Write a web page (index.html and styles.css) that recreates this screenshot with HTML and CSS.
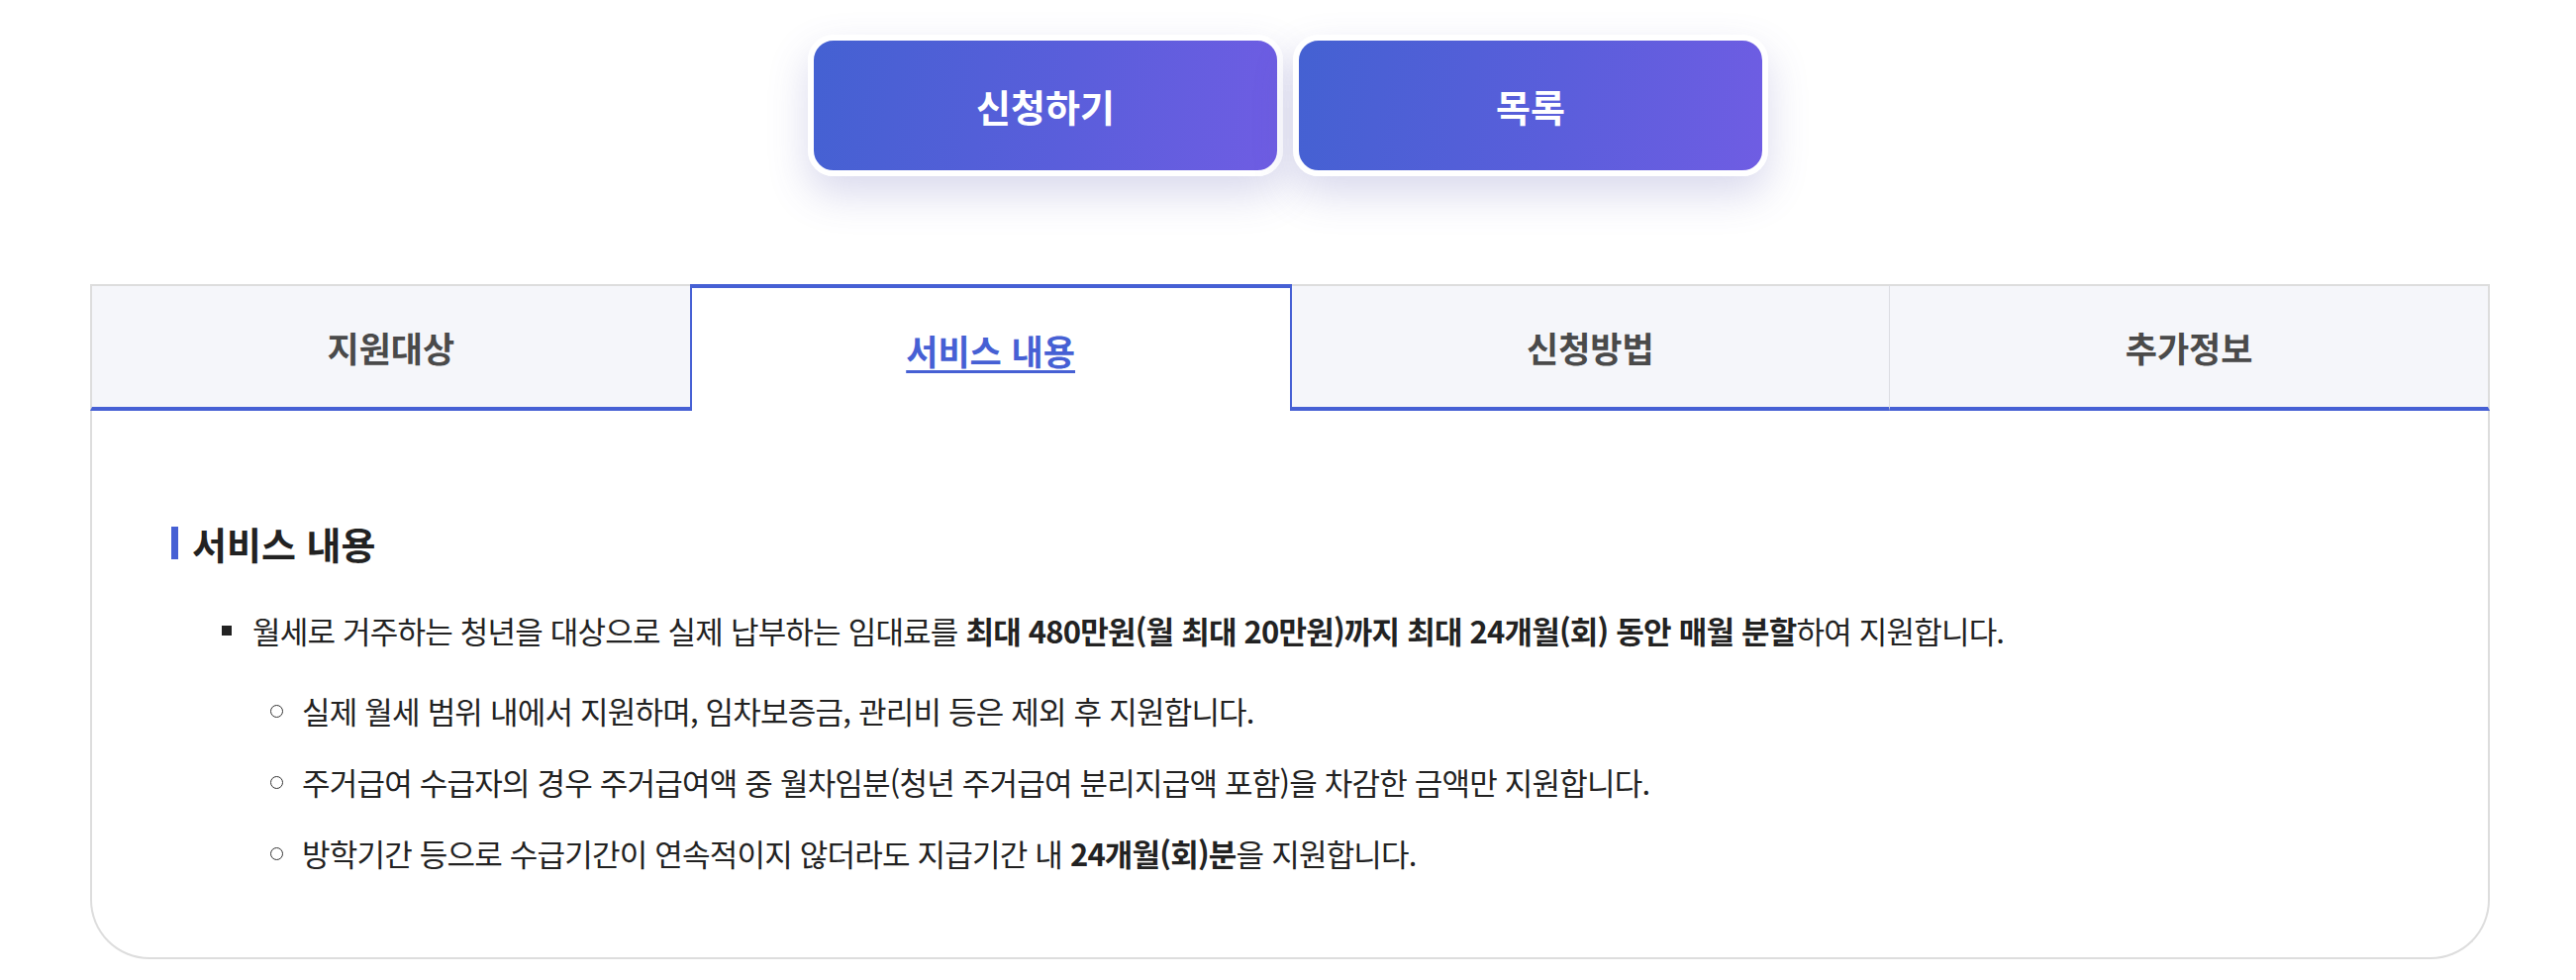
FILE: index.html
```html
<!DOCTYPE html>
<html lang="ko">
<head>
    <meta charset="UTF-8">
    <meta name="viewport" content="width=device-width, initial-scale=1.0">
    <title>청년월세 지원</title>
    <link rel="stylesheet" href="styles.css">
</head>
<body>
    <div class="btn-area">
        <button class="btn-main">신청하기</button>
        <button class="btn-main">목록</button>
    </div>

    <div class="tab-box">
        <ul class="tabs">
            <li class="tab">지원대상</li>
            <li class="tab active"><a href="#">서비스 내용</a></li>
            <li class="tab">신청방법</li>
            <li class="tab">추가정보</li>
        </ul>
        <div class="tab-content">
            <h3 class="sec-title">서비스 내용</h3>
            <ul class="dot-list">
                <li>
                    월세로 거주하는 청년을 대상으로 실제 납부하는 임대료를 <strong>최대 480만원(월 최대 20만원)까지 최대 24개월(회) 동안 매월 분할</strong>하여 지원합니다.
                    <ul class="circle-list">
                        <li>실제 월세 범위 내에서 지원하며, 임차보증금, 관리비 등은 제외 후 지원합니다.</li>
                        <li>주거급여 수급자의 경우 주거급여액 중 월차임분(청년 주거급여 분리지급액 포함)을 차감한 금액만 지원합니다.</li>
                        <li>방학기간 등으로 수급기간이 연속적이지 않더라도 지급기간 내 <strong>24개월(회)분</strong>을 지원합니다.</li>
                    </ul>
                </li>
            </ul>
        </div>
    </div>
</body>
</html>
```

FILE: styles.css
```css
* {
    box-sizing: border-box;
}
body {
    margin: 0;
    background: #fff;
    color: #222;
    font-family: "Noto Sans CJK KR", "Noto Sans", sans-serif;
}
ul {
    margin: 0;
    padding: 0;
    list-style: none;
}

/* buttons */
.btn-area {
    display: flex;
    justify-content: center;
    gap: 10px;
    padding-top: 35px;
}
.btn-main {
    width: 480px;
    height: 143px;
    border: 6px solid #fff;
    border-radius: 26px;
    background: linear-gradient(100deg, #4461d2 0%, #5a5edb 55%, #6f5de3 100%);
    box-shadow: 0 18px 40px rgba(80, 80, 175, 0.22);
    color: #fff;
    font-family: inherit;
    font-size: 38px;
    font-weight: 700;
    cursor: pointer;
}

/* tabs */
.tab-box {
    width: 2424px;
    margin: 109px 0 0 91px;
}
.tabs {
    display: flex;
}
.tab {
    flex: 1;
    height: 128px;
    display: flex;
    align-items: center;
    justify-content: center;
    background: #f5f6fa;
    border-top: 2px solid #ddd;
    border-bottom: 4px solid #4660d4;
    border-left: 1px solid #dcdde2;
    color: #4a4a4a;
    font-size: 35px;
    font-weight: 700;
}
.tab:first-child {
    border-left: 2px solid #ddd;
}
.tab:last-child {
    border-right: 2px solid #ddd;
}
.tab.active {
    background: #fff;
    border-top: 4px solid #4660d4;
    border-left: 2px solid #4660d4;
    border-right: 2px solid #4660d4;
    border-bottom: none;
}
.tab.active + .tab {
    border-left: none;
}
.tab.active a {
    color: #4660d4;
    text-decoration: underline;
    text-decoration-thickness: 3px;
    text-underline-offset: 5px;
}

/* content */
.tab-content {
    padding: 108px 80px 80px 80px;
    border: 2px solid #ddd;
    border-top: none;
    border-radius: 0 0 60px 60px;
}
.sec-title {
    display: flex;
    align-items: center;
    gap: 14px;
    margin: 0;
    height: 50px;
    font-size: 38px;
    font-weight: 700;
    color: #222;
}
.sec-title::before {
    content: '';
    width: 7px;
    height: 33px;
    background: #4660d4;
}
.dot-list {
    margin-top: 39px;
    padding-left: 82px;
}
.dot-list > li {
    position: relative;
    font-size: 31px;
    line-height: 50px;
    letter-spacing: -0.8px;
}
.dot-list > li::before {
    content: '';
    position: absolute;
    left: -31px;
    top: 20px;
    width: 10px;
    height: 10px;
    background: #222;
}
.dot-list strong {
    font-weight: 700;
}
.circle-list {
    margin-top: 31px;
    padding-left: 50px;
}
.circle-list li {
    position: relative;
    margin-top: 22px;
}
.circle-list li:first-child {
    margin-top: 0;
}
.circle-list li::before {
    content: '';
    position: absolute;
    left: -32px;
    top: 19px;
    width: 11px;
    height: 11px;
    border: 1px solid #333;
    border-radius: 50%;
}
```
